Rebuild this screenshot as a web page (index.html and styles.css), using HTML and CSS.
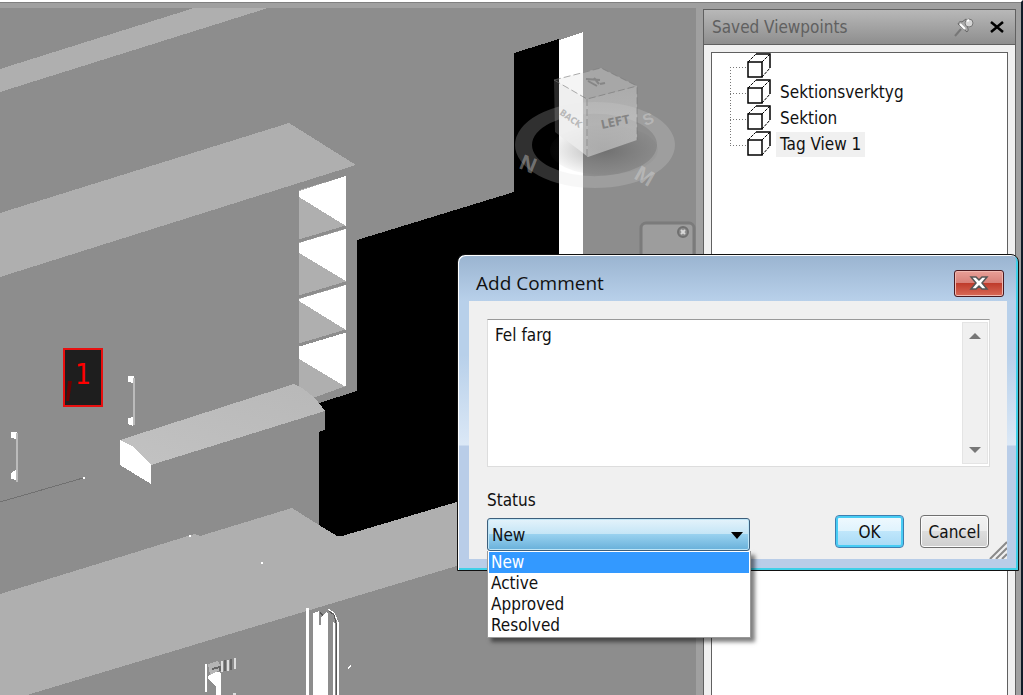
FILE: index.html
```
<!DOCTYPE html>
<html lang="en">
<head>
    <meta charset="UTF-8">
    <meta name="viewport" content="width=device-width, initial-scale=1.0">
    <title>Saved Viewpoints</title>
    <link rel="stylesheet" href="styles.css">
</head>
<body>
    <div class="app">
        <main class="scene">
            <svg class="scene-view" viewBox="0 8 696 687" preserveAspectRatio="xMinYMin slice" role="img" aria-label="3D view">
                <defs>
                    <linearGradient id="hood" x1="0" y1="1" x2="1" y2="0">
                        <stop offset="0" stop-color="#c2c2c2"/>
                        <stop offset="1" stop-color="#b8b8b8"/>
                    </linearGradient>
                    <radialGradient id="shadow">
                        <stop offset="0" stop-color="#444" stop-opacity=".4"/>
                        <stop offset="1" stop-color="#555" stop-opacity=".05"/>
                    </radialGradient>
                    <linearGradient id="face" x1="0" y1="0" x2="0" y2="1">
                        <stop offset="0" stop-color="#c4c4c4"/>
                        <stop offset="1" stop-color="#dedede"/>
                    </linearGradient>
                </defs>

                <g shape-rendering="crispEdges">
                    <!-- wall cabinets -->
                    <path fill="#afafaf" d="M0 69L194 8H268L0 92z"/>
                    <path fill="#afafaf" d="M0 213L289 123L356 165L0 277z"/>

                    <!-- opening in the wall -->
                    <path d="M357 240L514 192V53L559 39V560H342V536H337L319 525V430H325V411L319 403L357 391z"/>
                    <path fill="#fff" d="M559 40L583 32V300H559z"/>

                    <!-- open shelves -->
                    <path fill="#afafaf" d="M299 190L346 176V387L315 398L299 392z"/>
                    <path fill="#fff" d="M299 191L346 176V226L299 197z"/>
                    <path fill="#fff" d="M299 243L346 229V281L299 253z"/>
                    <path fill="#fff" d="M299 299L346 285V330L299 301z"/>
                    <path fill="#fff" d="M299 346L346 332V387L299 359z"/>
                    <path fill="none" stroke="#8d8d8d" stroke-width="3" d="M299 241L346 227M299 297L346 283M299 345L346 331"/>
                    <path fill="#8d8d8d" d="M346 386L357 382V391L319 403L313 398z"/>

                    <!-- hood -->
                    <path fill="#8d8d8d" d="M151 464L325 411V430L151 484z"/>
                    <path fill="url(#hood)" d="M120 440L294 384L302 388L315 398L325 411L151 465L135 449z"/>
                    <path fill="#fff" d="M120 440L134 447L151 465V484L120 465z"/>

                    <!-- worktop -->
                    <path fill="#afafaf" d="M0 594L188 536L195 534L200 536L292 508L319 525L337 536H342L460 501V565L27 695H0z"/>
                    <path fill="none" stroke="#707070" d="M0 502L83 478"/>
                    <path fill="#fff" d="M83 477h2v2h-2zM189 535h2v2h-2zM261 562h2v2h-2zM347 668l4 -3v2l-3 2z"/>

                    <!-- handles -->
                    <path fill="#fff" d="M128 376h6v7l-6 -1zM128 418l5 -1v9l-5 -2zM11 432h6v7l-6 -1zM11 473l5 -3v10l-5 -1z"/>
                    <path stroke="#bbb" stroke-width="2" d="M134 378V425M17 433V482"/>

                    <!-- pipes and tap -->
                    <path fill="#fff" d="M306 608h3v87h-3zM313 613l6 -2v14h2v-8l6 -6l1 4v80h-15zM333 621l2 3v71h-2zM337 620h1v75h-1z"/>
                    <path fill="none" stroke="#fff" stroke-width="1" d="M328 609l6 4l4 9v73"/>
                    <path fill="none" stroke="#555" d="M329 611l5 4l2 8v73M320 612l3 4"/>
                    <path fill="#fff" d="M205 664h2v28h-2zM208 676l8 -5l5 2v22h-5v-8l-8 -9z"/>
                    <path fill="#b5b5b5" d="M208 664l10 -3l4 8l-12 6z"/>
                    <path fill="none" stroke="#666" stroke-width="2" d="M212 669l8 -2v4M225 660v11M231 659v11"/>
                    <path fill="none" stroke="#ddd" stroke-width="2" d="M222 661v11M228 660v11M235 658v11M233 694h3"/>
                </g>

                <!-- tag -->
                <rect x="64" y="349" width="38" height="57" fill="#1e1e1e" stroke="#e81010" stroke-width="2"/>
                <path fill="#6a0000" d="M68 381h4l-3 20h-3z"/>
                <text class="tag-text" x="83" y="384">1</text>

                <!-- view cube -->
                <path fill="#dcdcdc" fill-opacity=".22" fill-rule="evenodd" d="M515 145a80 43 0 1 0 160 0a80 43 0 1 0 -160 0zM532 145a62 31 0 1 0 125 0a62 31 0 1 0 -125 0z"/>
                <ellipse cx="604" cy="150" rx="54" ry="25" fill="url(#shadow)"/>
                <path fill="#ccc" fill-opacity=".2" d="M554 80L588 99V157L555 132z"/>
                <path fill="#ccc" fill-opacity=".2" d="M554 80L601 68L637 86L588 99z"/>
                <path fill="#eee" fill-opacity=".8" d="M559 83L583 97V153L559 135z"/>
                <path fill="#c4c4c4" fill-opacity=".35" d="M583 72L601 68L637 86L588 99L583 97z"/>
                <path fill="url(#face)" fill-opacity=".55" d="M583 97L588 99L637 86V140L588 157L583 153z"/>
                <path fill="none" stroke="#777" stroke-opacity=".6" stroke-dasharray="7 3" d="M554 80L587 99L637 86M587 99V157M554 80L601 68L637 86V140"/>
                <path fill="none" stroke="#777" stroke-width="2" stroke-opacity=".7" d="M586 79l14 1M588 81l9 5M594 78l5 6M600 84l5 -1"/>
                <g class="cube-text">
                    <text transform="translate(602 129) rotate(-12)">LEFT</text>
                    <text class="cube-back" transform="translate(559 114) rotate(35)">BACK</text>
                </g>
                <g class="compass">
                    <text transform="translate(518 168) rotate(22)">N</text>
                    <text transform="translate(633 178) rotate(30)">M</text>
                    <text class="compass-far" transform="translate(645 126) rotate(-20)">S</text>
                </g>

                <!-- navigation bar -->
                <rect x="641" y="223" width="53" height="60" rx="5" fill="#9d9d9d" stroke="#7b7b7b" stroke-width="3"/>
                <circle cx="683" cy="232" r="5" fill="#8a8a8a" stroke="#707070" stroke-width="2"/>
                <path stroke="#d8d8d8" stroke-width="2" d="M681 230l4 4M685 230l-4 4"/>
            </svg>
        </main>

        <aside class="panel">
            <header class="panel-header">
                <h2>Saved Viewpoints</h2>
                <button class="icon-button" type="button" aria-label="Auto hide">
                    <svg width="22" height="22" viewBox="0 0 22 22">
                        <path d="M2 20L8 13" stroke="#777" stroke-width="2"/>
                        <path d="M5 8l9 8c2 -2 1 -4 0 -5l4 -4l-5 -4l-4 3c-2 -1 -3 0 -4 2z" fill="#aaa" stroke="#666"/>
                        <circle cx="16" cy="7" r="4" fill="#d5d5d5" stroke="#777"/>
                        <path d="M7 8l5 5M14 5l2 -1" stroke="#fff" stroke-width="2"/>
                    </svg>
                </button>
                <button class="icon-button" type="button" aria-label="Close panel">
                    <svg width="16" height="16" viewBox="0 0 16 16">
                        <path d="M2 3L14 13M14 3L2 13" stroke="#000" stroke-width="2.500"/>
                    </svg>
                </button>
            </header>
            <div class="panel-body">
                <svg class="symbols" aria-hidden="true">
                    <symbol id="box" viewBox="0 0 24 26">
                        <path d="M1 9L9 1H23V15L15 24H1z" fill="#fff"/>
                        <path d="M1 9h14v15h-14z" fill="none" stroke="#000" stroke-width="1.500"/>
                        <path d="M9 1H23V15" fill="none" stroke="#000" stroke-width="1.500"/>
                        <path d="M1 9L9 1M15 9L23 1M15 24L23 15" fill="none" stroke="#000" stroke-dasharray="3 1"/>
                    </symbol>
                </svg>
                <ul class="tree">
                    <li><svg class="box"><use href="#box"/></svg></li>
                    <li><svg class="box"><use href="#box"/></svg><span>Sektionsverktyg</span></li>
                    <li><svg class="box"><use href="#box"/></svg><span>Sektion</span></li>
                    <li><svg class="box"><use href="#box"/></svg><span class="selected">Tag View 1</span></li>
                </ul>
            </div>
        </aside>
    </div>

    <form class="dialog" role="dialog" aria-labelledby="dialogTitle">
        <header class="dialog-header">
            <h1 id="dialogTitle">Add Comment</h1>
            <button class="close" type="button" aria-label="Close">
                <svg width="20" height="16" viewBox="0 0 20 16">
                    <path d="M2 2h5l3 3l3 -3h5l-5 6l5 6h-5l-3 -3l-3 3h-5l5 -6z" fill="#fff" stroke="#555" stroke-width="1.500"/>
                </svg>
            </button>
        </header>
        <div class="dialog-body">
            <div class="comment">
                <textarea aria-label="Comment">Fel farg</textarea>
                <div class="scrollbar">
                    <button type="button" aria-label="Scroll up"><svg width="12" height="6" viewBox="0 0 12 6"><path d="M0 6L6 0L12 6z" fill="#777"/></svg></button>
                    <button type="button" aria-label="Scroll down"><svg width="12" height="6" viewBox="0 0 12 6"><path d="M0 0L6 6L12 0z" fill="#777"/></svg></button>
                </div>
            </div>
            <label for="status">Status</label>
            <div class="dialog-row">
                <div class="status">
                    <select id="status">
                        <option>New</option>
                        <option>Active</option>
                        <option>Approved</option>
                        <option>Resolved</option>
                    </select>
                    <svg class="arrow" width="12" height="7" viewBox="0 0 12 7"><path d="M0 0H12L6 7z"/></svg>
                    <ul class="options" role="listbox" aria-label="Status">
                        <li role="option" aria-selected="true">New</li>
                        <li role="option">Active</li>
                        <li role="option">Approved</li>
                        <li role="option">Resolved</li>
                    </ul>
                </div>
                <button class="button default" type="submit">OK</button>
                <button class="button" type="button">Cancel</button>
            </div>
            <svg class="grip" width="18" height="18" viewBox="0 0 18 18">
                <path d="M1 18L18 1M7 18L18 7M13 18L18 13" stroke="#8a8a8a" stroke-width="2"/>
            </svg>
        </div>
    </form>
</body>
</html>
```
FILE: styles.css
```
* {
    box-sizing: border-box;
}

body {
    margin: 0;
    height: 100vh;
    overflow: hidden;
    position: relative;
    background-color: #a0a0a0;
    font-family: "DejaVu Sans Condensed", "DejaVu Sans", sans-serif;
    font-size: 17px;
    color: #111;
}

h1, h2, ul {
    margin: 0;
    padding: 0;
    font-weight: normal;
    list-style: none;
}

button, select, textarea {
    font: inherit;
    color: inherit;
    padding: 0;
}

.app {
    display: flex;
    gap: 7px;
    height: 100%;
    padding: 6px 5px 0 0;
    border-top: 2px solid #fff;
    border-right: 2px solid #101c28;
    box-shadow: inset 0 1px #808080;
}

/* 3D view */
.scene {
    flex: 1;
    min-width: 0;
    background-color: #8d8d8d;
}

.scene-view {
    display: block;
    width: 100%;
    height: 100%;
}

.tag-text {
    font: 28px "DejaVu Sans Condensed", "DejaVu Sans", sans-serif;
    fill: #f00;
    text-anchor: middle;
}

.cube-text {
    font: bold 15px "DejaVu Sans Condensed", "DejaVu Sans", sans-serif;
    font-size: 12px;
    fill: #777;
    fill-opacity: 0.8;
}

.cube-back {
    font-size: 9px;
    fill: #aaa;
}

.compass {
    font: bold 22px "Liberation Sans", sans-serif;
    fill: #ddd;
    fill-opacity: 0.4;
}

.compass-far {
    font-size: 16px;
}

/* viewpoints panel */
.panel {
    width: 313px;
    display: flex;
    flex-direction: column;
    margin-top: 1px;
    border: 1px solid #606060;
    border-bottom: none;
    background-color: #f0f0f0;
}

.panel-header {
    display: flex;
    align-items: center;
    gap: 14px;
    height: 35px;
    padding: 0 10px 0 8px;
    border-bottom: 1px solid #606060;
    background: linear-gradient(#b8b8b8, #8e8e8e);
}

.panel-header h2 {
    flex: 1;
    font-size: 17px;
    color: #606060;
}

.icon-button {
    display: flex;
    border: none;
    background: none;
}

.panel-body {
    flex: 1;
    display: flex;
    padding: 7px 7px 0;
}

.symbols {
    display: none;
}

.tree {
    flex: 1;
    border: 1px solid #606060;
    border-bottom: none;
    background-color: #fff;
    padding-left: 18px;
}

.tree li {
    display: flex;
    align-items: center;
    width: fit-content;
    height: 26px;
    background:
        repeating-linear-gradient(90deg, #777 0 1px, #fff 1px 3px) 0 14px / 20px 1px no-repeat,
        repeating-linear-gradient(#777 0 1px, #fff 1px 3px) 0 0 / 1px 26px no-repeat;
}

.tree li:first-child {
    background-position: 0 14px, 0 14px;
}

.tree li:last-child {
    background-size: 20px 1px, 1px 14px;
}

.tree .box {
    width: 24px;
    height: 26px;
    margin-left: 17px;
}

.tree span {
    padding: 0 4px;
    margin-left: 5px;
    line-height: 25px;
    background-color: #fff;
}

.tree .selected {
    background-color: #f0f0f0;
}

/* comment dialog */
.dialog {
    position: absolute;
    top: 254px;
    right: 4px;
    width: 562px;
    padding: 0 11px 11px;
    border: 1px solid #111;
    border-radius: 8px 8px 0 0;
    box-shadow: inset 1px 1px #fff, inset -2px -2px #3fd0e8;
    background: linear-gradient(#9ab4d0, #b8d0ea 46px, #b8d0ea 100px, #dbe8f6 190px, #b9cde8 191px);
}

.dialog-header {
    display: flex;
    align-items: center;
    justify-content: space-between;
    height: 46px;
    padding: 10px 3px 0 7px;
}

.dialog-header h1 {
    font-family: "Open Sans", "Noto Sans", sans-serif;
    font-size: 19px;
}

.close {
    display: flex;
    align-items: center;
    justify-content: center;
    width: 50px;
    height: 27px;
    border: 1px solid #4a1a20;
    border-radius: 3px;
    box-shadow: inset 0 0 0 1px #f0b8b0;
    background: linear-gradient(#e8a098, #d88078 48%, #bf3c2c 50%, #d86a58);
}

.dialog-body {
    position: relative;
    padding: 18px 18px 8px;
    background-color: #f0f0f0;
}

.comment {
    display: flex;
    height: 148px;
    margin-right: -1px;
    border: 1px solid #ddd;
    border-top-color: #999;
    background-color: #fff;
}

.comment textarea {
    flex: 1;
    padding: 4px 7px;
    border: none;
    outline: none;
    resize: none;
    background: none;
    line-height: 22px;
}

.scrollbar {
    display: flex;
    flex-direction: column;
    justify-content: space-between;
    width: 26px;
    margin: 2px 1px 2px 2px;
    border: 1px solid #e4e4e4;
    background-color: #f0f0f0;
}

.scrollbar button {
    display: flex;
    align-items: center;
    justify-content: center;
    height: 26px;
    border: none;
    background: none;
}

.dialog label {
    display: block;
    margin-top: 20px;
    line-height: 26px;
}

.dialog-row {
    display: flex;
    align-items: flex-start;
    gap: 16px;
    margin-top: 2px;
}

.status {
    position: relative;
    width: 263px;
    margin: 3px auto 0 0;
}

.status select {
    display: block;
    appearance: none;
    width: 100%;
    height: 33px;
    padding-left: 4px;
    border: 1px solid #3c5f7c;
    border-radius: 3px;
    box-shadow: inset 0 0 0 1px #bfe6f8;
    background: linear-gradient(#e4f3fb, #c4e5f6 49%, #98d1ef 50%, #68b0da);
}

.status .arrow {
    position: absolute;
    right: 7px;
    top: 14px;
}

.options {
    position: absolute;
    top: 100%;
    left: 0;
    width: 264px;
    padding: 1px;
    border: 1px solid #999;
    border-top: none;
    background-color: #fff;
    box-shadow: 4px 4px 4px rgba(0, 0, 0, 0.5);
    z-index: 1;
}

.options li {
    padding-left: 2px;
    line-height: 21px;
}

.options [aria-selected="true"] {
    background-color: #3399ff;
    color: #fff;
}

.button {
    width: 69px;
    height: 33px;
    border: 1px solid #707070;
    border-radius: 4px;
    box-shadow: inset 0 0 0 1px #fcfcfc;
    background: linear-gradient(#f2f2f2, #ebebeb 49%, #dddddd 50%, #cfcfcf);
}

.button.default {
    border-color: #3c7fb1;
    box-shadow: inset 0 0 0 2px #48ccf4;
    background: linear-gradient(#f0f9fe, #dff3fd 49%, #bfe6fb 50%, #a8daf5);
}

.grip {
    position: absolute;
    right: 0;
    bottom: 0;
}
```
